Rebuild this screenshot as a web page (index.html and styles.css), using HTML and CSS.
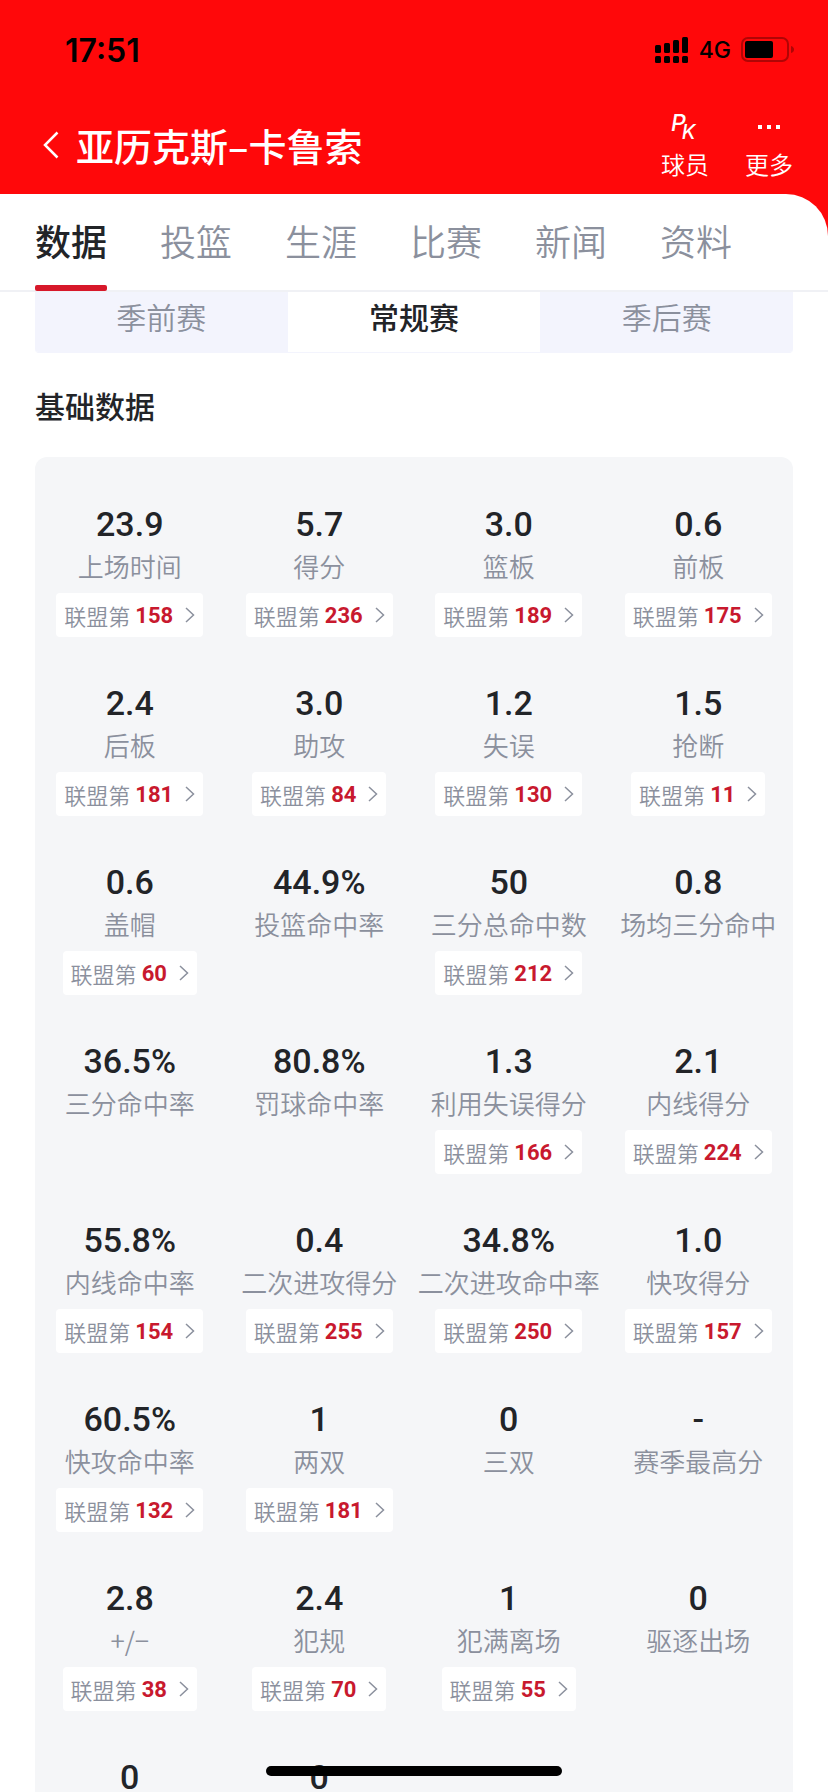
FILE: index.html
```html
<!DOCTYPE html>
<html lang="zh-CN">

<head>
  <meta charset="UTF-8">
  <meta name="viewport" content="width=device-width, initial-scale=1.0">
  <title>亚历克斯-卡鲁索</title>
  <link rel="stylesheet" href="styles.css">
</head>

<body>
  <!-- 公用箭头 -->
  <svg class="symbols" width="0" height="0" aria-hidden="true">
    <symbol id="arrow" viewBox="0 0 10 16">
      <path d="M1 1 L8.5 8 L1 15" fill="none" stroke="currentColor" stroke-width="1.5" />
    </symbol>
  </svg>

  <header class="header">
    <div class="status">
      <span class="clock">17:51</span>
      <div class="status-right">
        <svg width="34" height="26" viewBox="0 0 34 26" aria-hidden="true">
          <rect x="0" y="8" width="6" height="8" rx="1.5" />
          <rect x="9" y="6" width="6" height="10" rx="1.5" />
          <rect x="18" y="3" width="6" height="13" rx="1.5" />
          <rect x="27" y="0" width="6" height="16" rx="1.5" />
          <rect x="0" y="19" width="6" height="7" rx="1.5" />
          <rect x="9" y="19" width="6" height="7" rx="1.5" />
          <rect x="18" y="19" width="6" height="7" rx="1.5" />
          <rect x="27" y="19" width="6" height="7" rx="1.5" />
        </svg>
        <span class="network">4G</span>
        <svg width="53" height="26" viewBox="0 0 53 26" aria-hidden="true">
          <rect x="1" y="1" width="46" height="23" rx="6" fill="none" stroke="#b00505" stroke-width="2" />
          <rect x="4" y="4" width="28" height="17" rx="2" />
          <path d="M50 9 Q53 10 53 12.500 Q53 15 50 16 Z" fill="#b00505" />
        </svg>
      </div>
    </div>
    <div class="nav">
      <button class="back" aria-label="返回">
        <svg width="16" height="28" viewBox="0 0 16 28">
          <path d="M14.500 1.500 L2 14 L14.500 26.500" fill="none" stroke="#fff" stroke-width="2.500" />
        </svg>
      </button>
      <h1 class="title">亚历克斯–卡鲁索</h1>
      <div class="actions">
        <button class="action">
          <svg width="32" height="32" viewBox="0 0 32 32">
            <text class="pk" x="2" y="21">P<tspan class="pk-small" dx="-4" dy="8">K</tspan></text>
          </svg>
          <span>球员</span>
        </button>
        <button class="action">
          <svg width="32" height="32" viewBox="0 0 32 32" fill="#fff">
            <rect x="5" y="15" width="4" height="4" />
            <rect x="14" y="15" width="4" height="4" />
            <rect x="23" y="15" width="4" height="4" />
          </svg>
          <span>更多</span>
        </button>
      </div>
    </div>
  </header>

  <div class="tabs-wrap">
    <nav class="tabs">
      <a class="tab active" href="#">数据</a>
      <a class="tab" href="#">投篮</a>
      <a class="tab" href="#">生涯</a>
      <a class="tab" href="#">比赛</a>
      <a class="tab" href="#">新闻</a>
      <a class="tab" href="#">资料</a>
    </nav>
  </div>

  <main class="main">
    <div class="season">
      <button>季前赛</button>
      <button class="active">常规赛</button>
      <button>季后赛</button>
    </div>
    <h2 class="heading">基础数据</h2>

    <div class="stats">
      <div class="item">
        <p class="value">23.9</p>
        <p class="label">上场时间</p>
        <a class="rank" href="#">联盟第<b>158</b><svg><use href="#arrow" /></svg></a>
      </div>
      <div class="item">
        <p class="value">5.7</p>
        <p class="label">得分</p>
        <a class="rank" href="#">联盟第<b>236</b><svg><use href="#arrow" /></svg></a>
      </div>
      <div class="item">
        <p class="value">3.0</p>
        <p class="label">篮板</p>
        <a class="rank" href="#">联盟第<b>189</b><svg><use href="#arrow" /></svg></a>
      </div>
      <div class="item">
        <p class="value">0.6</p>
        <p class="label">前板</p>
        <a class="rank" href="#">联盟第<b>175</b><svg><use href="#arrow" /></svg></a>
      </div>

      <div class="item">
        <p class="value">2.4</p>
        <p class="label">后板</p>
        <a class="rank" href="#">联盟第<b>181</b><svg><use href="#arrow" /></svg></a>
      </div>
      <div class="item">
        <p class="value">3.0</p>
        <p class="label">助攻</p>
        <a class="rank" href="#">联盟第<b>84</b><svg><use href="#arrow" /></svg></a>
      </div>
      <div class="item">
        <p class="value">1.2</p>
        <p class="label">失误</p>
        <a class="rank" href="#">联盟第<b>130</b><svg><use href="#arrow" /></svg></a>
      </div>
      <div class="item">
        <p class="value">1.5</p>
        <p class="label">抢断</p>
        <a class="rank" href="#">联盟第<b>11</b><svg><use href="#arrow" /></svg></a>
      </div>

      <div class="item">
        <p class="value">0.6</p>
        <p class="label">盖帽</p>
        <a class="rank" href="#">联盟第<b>60</b><svg><use href="#arrow" /></svg></a>
      </div>
      <div class="item">
        <p class="value">44.9%</p>
        <p class="label">投篮命中率</p>
      </div>
      <div class="item">
        <p class="value">50</p>
        <p class="label">三分总命中数</p>
        <a class="rank" href="#">联盟第<b>212</b><svg><use href="#arrow" /></svg></a>
      </div>
      <div class="item">
        <p class="value">0.8</p>
        <p class="label">场均三分命中</p>
      </div>

      <div class="item">
        <p class="value">36.5%</p>
        <p class="label">三分命中率</p>
      </div>
      <div class="item">
        <p class="value">80.8%</p>
        <p class="label">罚球命中率</p>
      </div>
      <div class="item">
        <p class="value">1.3</p>
        <p class="label">利用失误得分</p>
        <a class="rank" href="#">联盟第<b>166</b><svg><use href="#arrow" /></svg></a>
      </div>
      <div class="item">
        <p class="value">2.1</p>
        <p class="label">内线得分</p>
        <a class="rank" href="#">联盟第<b>224</b><svg><use href="#arrow" /></svg></a>
      </div>

      <div class="item">
        <p class="value">55.8%</p>
        <p class="label">内线命中率</p>
        <a class="rank" href="#">联盟第<b>154</b><svg><use href="#arrow" /></svg></a>
      </div>
      <div class="item">
        <p class="value">0.4</p>
        <p class="label">二次进攻得分</p>
        <a class="rank" href="#">联盟第<b>255</b><svg><use href="#arrow" /></svg></a>
      </div>
      <div class="item">
        <p class="value">34.8%</p>
        <p class="label">二次进攻命中率</p>
        <a class="rank" href="#">联盟第<b>250</b><svg><use href="#arrow" /></svg></a>
      </div>
      <div class="item">
        <p class="value">1.0</p>
        <p class="label">快攻得分</p>
        <a class="rank" href="#">联盟第<b>157</b><svg><use href="#arrow" /></svg></a>
      </div>

      <div class="item">
        <p class="value">60.5%</p>
        <p class="label">快攻命中率</p>
        <a class="rank" href="#">联盟第<b>132</b><svg><use href="#arrow" /></svg></a>
      </div>
      <div class="item">
        <p class="value">1</p>
        <p class="label">两双</p>
        <a class="rank" href="#">联盟第<b>181</b><svg><use href="#arrow" /></svg></a>
      </div>
      <div class="item">
        <p class="value">0</p>
        <p class="label">三双</p>
      </div>
      <div class="item">
        <p class="value">-</p>
        <p class="label">赛季最高分</p>
      </div>

      <div class="item">
        <p class="value">2.8</p>
        <p class="label">+/−</p>
        <a class="rank" href="#">联盟第<b>38</b><svg><use href="#arrow" /></svg></a>
      </div>
      <div class="item">
        <p class="value">2.4</p>
        <p class="label">犯规</p>
        <a class="rank" href="#">联盟第<b>70</b><svg><use href="#arrow" /></svg></a>
      </div>
      <div class="item">
        <p class="value">1</p>
        <p class="label">犯满离场</p>
        <a class="rank" href="#">联盟第<b>55</b><svg><use href="#arrow" /></svg></a>
      </div>
      <div class="item">
        <p class="value">0</p>
        <p class="label">驱逐出场</p>
      </div>

      <div class="item">
        <p class="value">0</p>
      </div>
      <div class="item">
        <p class="value">0</p>
      </div>
    </div>
  </main>

  <div class="home-bar"></div>
</body>

</html>
```
FILE: styles.css
```css
* {
  box-sizing: border-box;
}

body {
  display: flex;
  flex-direction: column;
  height: 100vh;
  margin: 0;
  overflow: hidden;
  background: #fff;
  color: #222428;
  font-family: "Noto Sans CJK SC", sans-serif;
}

h1, h2, p {
  margin: 0;
}

a {
  text-decoration: none;
}

button {
  padding: 0;
  border: none;
  background: none;
  font-family: inherit;
  cursor: pointer;
}

.symbols {
  position: absolute;
}

/* 顶部红色区域 */
.header {
  background: #ff080a;
}

.status {
  display: flex;
  justify-content: space-between;
  align-items: center;
  height: 100px;
  padding: 0 34px 0 65px;
  color: #000;
  font-family: Inter, sans-serif;
}

.clock {
  font-size: 32px;
  font-weight: 600;
}

.status-right {
  display: flex;
  align-items: center;
  gap: 10px;
}

.network {
  font-size: 23px;
  font-weight: 500;
}

.nav {
  display: flex;
  align-items: center;
  height: 94px;
  padding: 0 35px 4px 43px;
  color: #fff;
}

.back {
  display: flex;
}

.title {
  flex: 1;
  margin-left: 17px;
  font-size: 38px;
  font-weight: 500;
  line-height: 56px;
}

.actions {
  display: flex;
  gap: 36px;
}

.action {
  display: flex;
  flex-direction: column;
  align-items: center;
  gap: 6px;
  color: #fff;
  font-size: 24px;
  font-weight: 350;
  line-height: 32px;
}

.pk {
  fill: #fff;
  font-family: Inter, sans-serif;
  font-size: 23px;
  font-style: italic;
  font-weight: 500;
}

.pk-small {
  font-size: 20px;
}

/* 标签栏，右上角圆角露出红色 */
.tabs-wrap {
  background: #ff080a;
}

.tabs {
  display: flex;
  justify-content: space-between;
  padding: 0 96px 0 35px;
  border-bottom: 2px solid #f0f1f5;
  border-top-right-radius: 42px;
  background: #fff;
}

.tab {
  height: 96px;
  color: #8b909d;
  font-size: 36px;
  font-weight: 350;
  line-height: 92px;
}

.tab.active {
  position: relative;
  color: #222428;
  font-weight: 500;
}

.tab.active::after {
  content: "";
  position: absolute;
  left: 0;
  right: 0;
  bottom: -1px;
  height: 6px;
  border-radius: 2px;
  background: #d7182a;
}

.main {
  flex: 1;
  min-height: 0;
  padding: 0 35px;
  overflow: hidden;
}

.season {
  display: grid;
  grid-template-columns: repeat(3, 1fr);
  border-bottom: 1px solid #f3f4fd;
  border-radius: 0 0 4px 4px;
  overflow: hidden;
}

.season button {
  padding-bottom: 12px;
  background: #f3f4fd;
  color: #8b909d;
  font-size: 30px;
  font-weight: 350;
  line-height: 48px;
}

.season .active {
  background: #fff;
  color: #222428;
  font-weight: 500;
}

.heading {
  padding: 32px 0;
  font-size: 30px;
  font-weight: 500;
  line-height: 40px;
}

/* 数据表格 */
.stats {
  display: grid;
  grid-template-columns: repeat(4, minmax(0, 1fr));
  row-gap: 46px;
  padding: 47px 0;
  border-radius: 12px;
  background: #f5f6f8;
}

.item {
  display: flex;
  flex-direction: column;
  align-items: center;
  white-space: nowrap;
}

.value {
  font-family: Roboto, sans-serif;
  font-size: 34px;
  font-weight: 500;
  line-height: 40px;
}

.label {
  margin-top: 4px;
  color: #8b909d;
  font-size: 26px;
  font-weight: 350;
  line-height: 36px;
}

.rank {
  display: flex;
  align-items: center;
  height: 44px;
  margin-top: 9px;
  padding: 0 8px;
  border-radius: 4px;
  background: #fff;
  color: #8b909d;
  font-size: 22px;
  font-weight: 350;
}

.rank b {
  margin: 0 12px 0 5px;
  color: #c8192e;
  font-family: Roboto, sans-serif;
  font-weight: 700;
}

.rank svg {
  width: 10px;
  height: 16px;
}

/* 底部横条 */
.home-bar {
  position: fixed;
  bottom: 16px;
  left: 50%;
  width: 296px;
  height: 10px;
  margin-left: -148px;
  border-radius: 5px;
  background: #000;
}
```
